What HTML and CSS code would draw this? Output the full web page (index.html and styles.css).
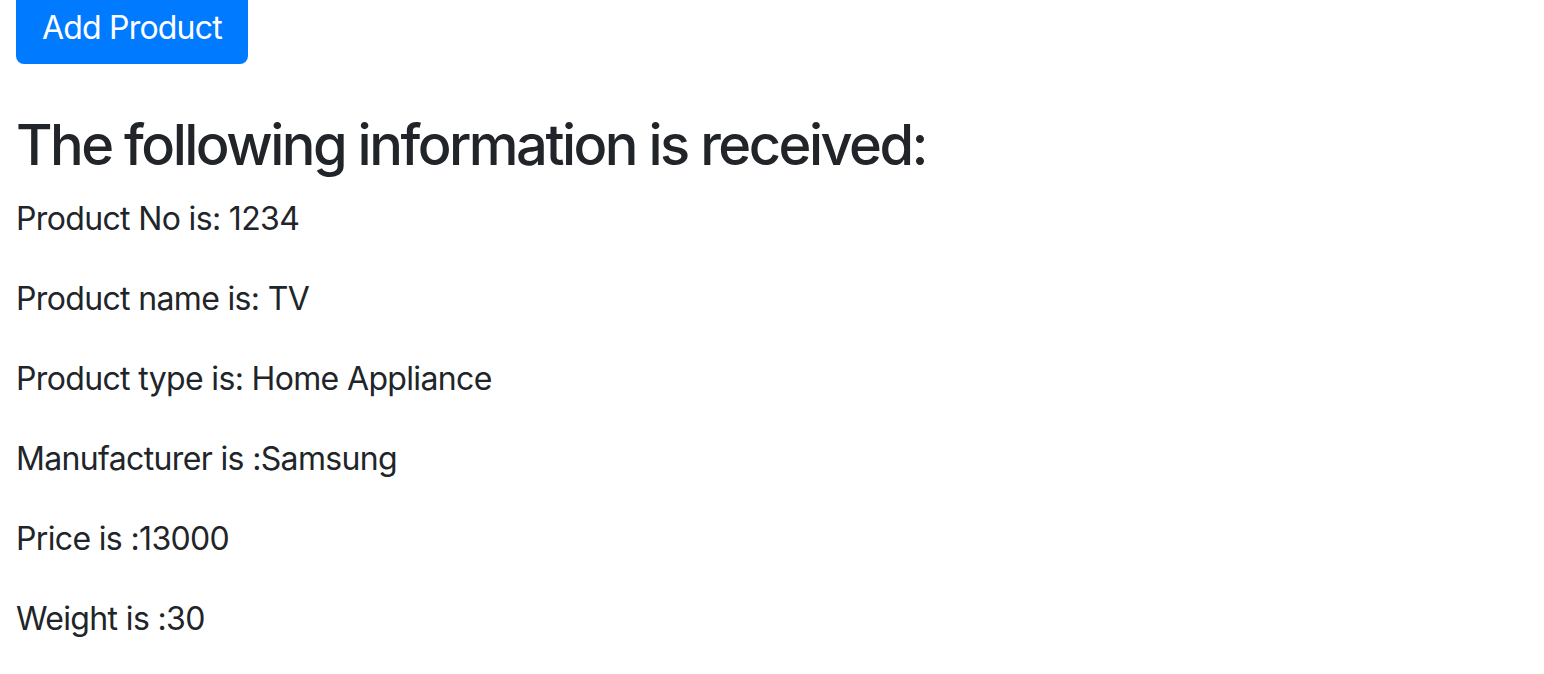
FILE: index.html
```html
<!DOCTYPE html>
<html lang="en">
<head>
<meta charset="utf-8">
<title>Product</title>
<link rel="stylesheet" href="styles.css">
</head>
<body>
<main class="page">
  <button class="btn-primary" type="button">Add Product</button>
  <h2 class="title">The following information is received:</h2>
  <p class="line">Product No is: 1234</p>
  <p class="line">Product name is: TV</p>
  <p class="line">Product type is: Home Appliance</p>
  <p class="line">Manufacturer is :Samsung</p>
  <p class="line">Price is :13000</p>
  <p class="line">Weight is :30</p>
</main>
</body>
</html>
```
FILE: styles.css
```css
html, body {
  margin: 0;
  padding: 0;
  background: #fff;
}
body {
  font-family: Inter, "Noto Sans", "Liberation Sans", sans-serif;
  color: #212529;
  font-size: 32px;
  line-height: 1.5;
  letter-spacing: -0.65px;
}
.page {
  display: flex;
  flex-direction: column;
  align-items: flex-start;
  padding: 0 16px;
  margin-top: -8px;
}
.btn-primary {
  font-family: inherit;
  font-size: 32px;
  line-height: 1.5;
  letter-spacing: -0.8px;
  color: #fff;
  background: #007bff;
  border: 2px solid #007bff;
  border-radius: 8px;
  padding: 10px 24px;
  margin: 0;
}
.title {
  font-size: 56px;
  font-weight: 540;
  line-height: 1.2;
  margin: 48px 0 16px;
  letter-spacing: -2.5px;
}
.line {
  margin: 0 0 32px;
}
```
